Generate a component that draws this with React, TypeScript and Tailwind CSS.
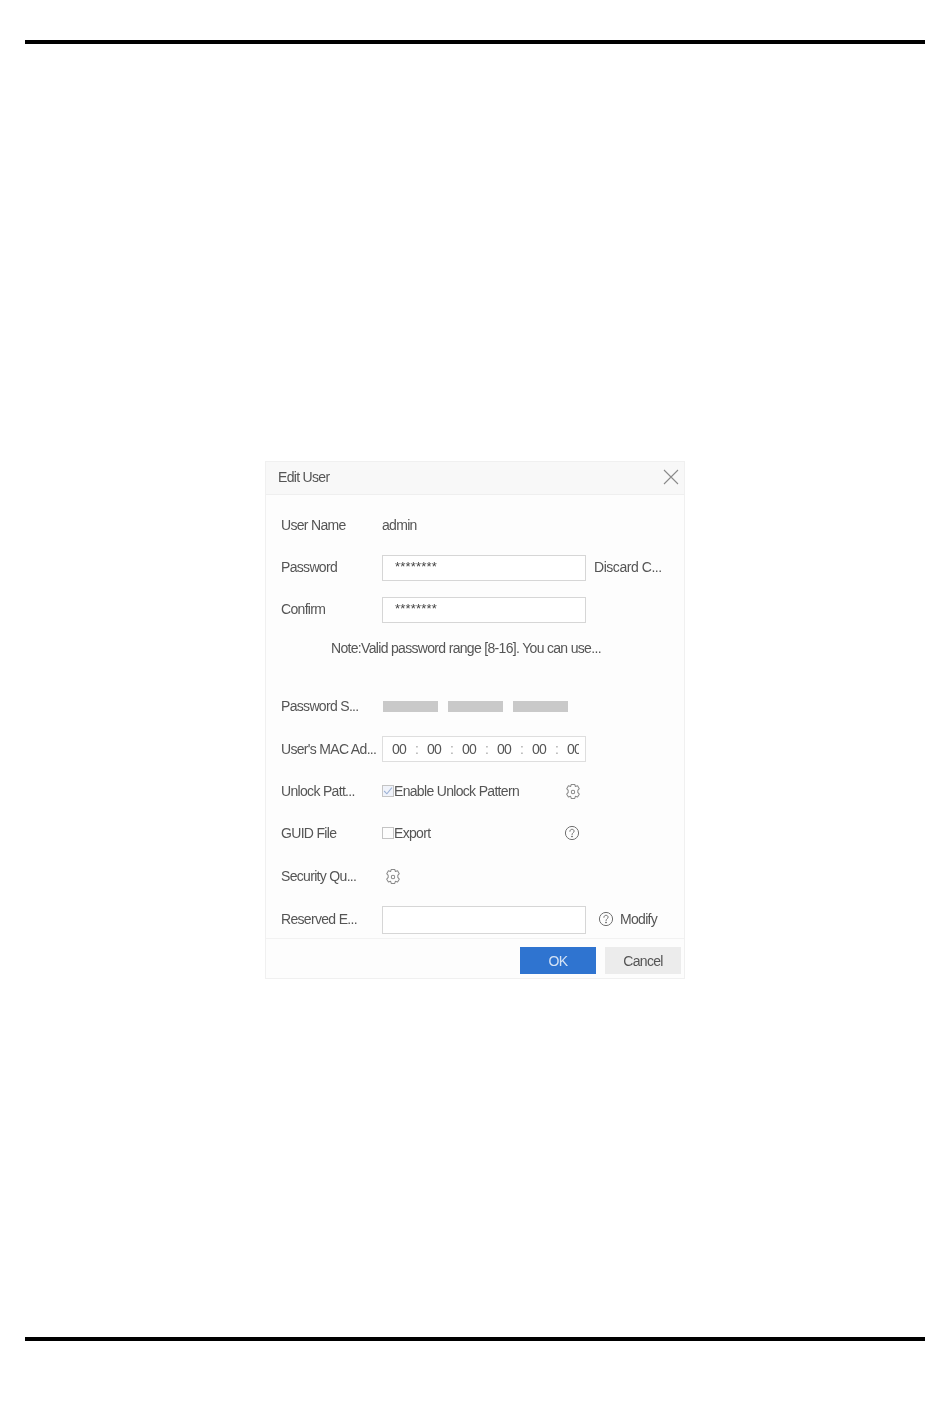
import React, { FC, ReactNode } from 'react';

const textClass = 'whitespace-nowrap pt-[1px] text-[14px] tracking-[-0.68px] text-[#555]';

const Gear: FC = () => (
    <svg className="mx-[0.5px] mt-[1px]" width="16" height="16" viewBox="2 1.5 13 14" fill="none" stroke="#8a8a8a" strokeWidth="0.9">
        <path d="M7 1.900h3l.6 1.800 1.900-.6 1.500 2.500-1.300 1.500v1.800l1.300 1.500-1.500 2.500-1.900-.6-.6 1.800H7l-.6-1.800-1.900.6-1.500-2.500 1.300-1.500V7.100L3 5.600l1.500-2.500 1.900.6z" strokeLinejoin="round" />
        <circle cx="8.500" cy="8.500" r="1.500" />
    </svg>
);

const Help: FC = () => (
    <svg width="16" height="16" viewBox="0 0 16 16" fill="none" stroke="#707070" strokeWidth="1">
        <circle cx="8" cy="8" r="6.600" />
        <path d="M5.900 6.300c0-1.300 1-2 2.100-2s2.100.7 2.100 1.900c0 1.500-2.100 1.600-2.100 3.300" strokeLinecap="round" />
        <circle cx="8" cy="11.500" r="0.500" fill="#707070" />
    </svg>
);

const Row: FC<{ label: string; children?: ReactNode; className?: string }> = ({ label, children, className }) => (
    <div className={`flex items-center pl-[15px] ${className ?? 'h-[42px]'}`}>
        <div className={`w-[101px] shrink-0 ${textClass}`}>{label}</div>
        {children}
    </div>
);

const Input: FC<{ value?: string; className?: string }> = ({ value, className }) => (
    <div className={`w-[204px] border border-[#d6d6d6] bg-white pl-[12px] pt-[4px] text-[13px] leading-[14px] tracking-[0.2px] text-[#444] ${className ?? 'mt-[2px] h-[26px]'}`}>
        {value}
    </div>
);

const Bar: FC = () => <div className="h-[11px] w-[55px] bg-[#c9c9c9]" />;

const App: FC = () => {
    const mac = ['00', '00', '00', '00', '00'];

    return (
        <div className="flex h-[1408px] w-[950px] flex-col bg-white pt-[40px] font-['Liberation_Sans',Arial,sans-serif]">
            <div className="mx-[25px] h-[3.500px] shrink-0 bg-black" />

            <div className="mx-auto mt-[417.500px] flex h-[518px] w-[420px] shrink-0 flex-col border border-[#f0f0f0] bg-[#fdfdfd] blur-[0.45px]">
                <div className="flex h-[33px] shrink-0 items-center justify-between border-b border-[#efefef] bg-[#f8f8f8] pb-[2px] pl-[12px] pr-[5px]">
                    <span className={textClass}>Edit User</span>
                    <svg width="16" height="16" viewBox="0 0 16 16" stroke="#8a8a8a" strokeWidth="1.100">
                        <path d="M1 1l14 14M15 1L1 15" />
                    </svg>
                </div>

                <div className="flex-1 pt-[9px]">
                    <Row label="User Name">
                        <span className={textClass}>admin</span>
                    </Row>
                    <Row label="Password">
                        <Input value="********" />
                        <span className={`ml-[8px] tracking-[-0.45px]! ${textClass}`}>Discard C...</span>
                    </Row>
                    <Row label="Confirm">
                        <Input value="********" />
                    </Row>
                    <div className={`flex h-[36px] items-center pl-[65px] ${textClass}`}>
                        Note:Valid password range [8-16]. You can use...
                    </div>
                    <Row label="Password S..." className="mt-[19px] h-[42px]">
                        <div className="ml-[1px] flex gap-[10px]">
                            <Bar />
                            <Bar />
                            <Bar />
                        </div>
                    </Row>
                    <Row label="User's MAC Ad..." className="mt-[1px] h-[42px]">
                        <div className={`flex h-[26px] w-[204px] items-center overflow-hidden border border-[#dedede] bg-white pl-[9px] ${textClass}`}>
                            {mac.map((part, i) => (
                                <React.Fragment key={i}>
                                    <span className="w-[14px]">{part}</span>
                                    <span className="w-[21px] text-center text-[#aaa]">:</span>
                                </React.Fragment>
                            ))}
                            <span className="w-[12px] overflow-hidden">00</span>
                        </div>
                    </Row>
                    <Row label="Unlock Patt...">
                        <div className="flex w-[182px] items-center">
                            <div className="flex h-[12px] w-[12px] items-center justify-center border border-[#c4c4c4] bg-[#f0f3fa]">
                                <svg width="10" height="10" viewBox="0 0 9 9" fill="none" stroke="#9db2d6" strokeWidth="1">
                                    <path d="M1 4.500l2.500 2.500L8 1.500" />
                                </svg>
                            </div>
                            <span className={textClass}>Enable Unlock Pattern</span>
                        </div>
                        <Gear />
                    </Row>
                    <Row label="GUID File">
                        <div className="flex w-[182px] items-center">
                            <div className="h-[12px] w-[12px] border border-[#c4c4c4]" />
                            <span className={textClass}>Export</span>
                        </div>
                        <Help />
                    </Row>
                    <Row label="Security Qu..." className="mt-[1px] h-[42px]">
                        <div className="ml-[2px]">
                            <Gear />
                        </div>
                    </Row>
                    <Row label="Reserved E..." className="mt-[9px] h-[28px] pb-[2px]">
                        <Input className="-mb-[2px] h-[28px]" />
                        <div className="ml-[12px]">
                            <Help />
                        </div>
                        <span className={`ml-[6px] ${textClass}`}>Modify</span>
                    </Row>
                </div>

                <div className="flex h-[40px] shrink-0 items-start justify-end gap-[9px] border-t border-[#f2f2f2] pr-[3px] pt-[8px]">
                    <button className={`h-[27px] w-[76px] bg-[#2f74d0] ${textClass} text-[#d5e3f5]!`}>OK</button>
                    <button className={`h-[27px] w-[76px] bg-[#ececec] ${textClass}`}>Cancel</button>
                </div>
            </div>

            <div className="mx-[25px] mt-[358px] h-[3.500px] shrink-0 bg-black" />
        </div>
    );
};

export default App;
